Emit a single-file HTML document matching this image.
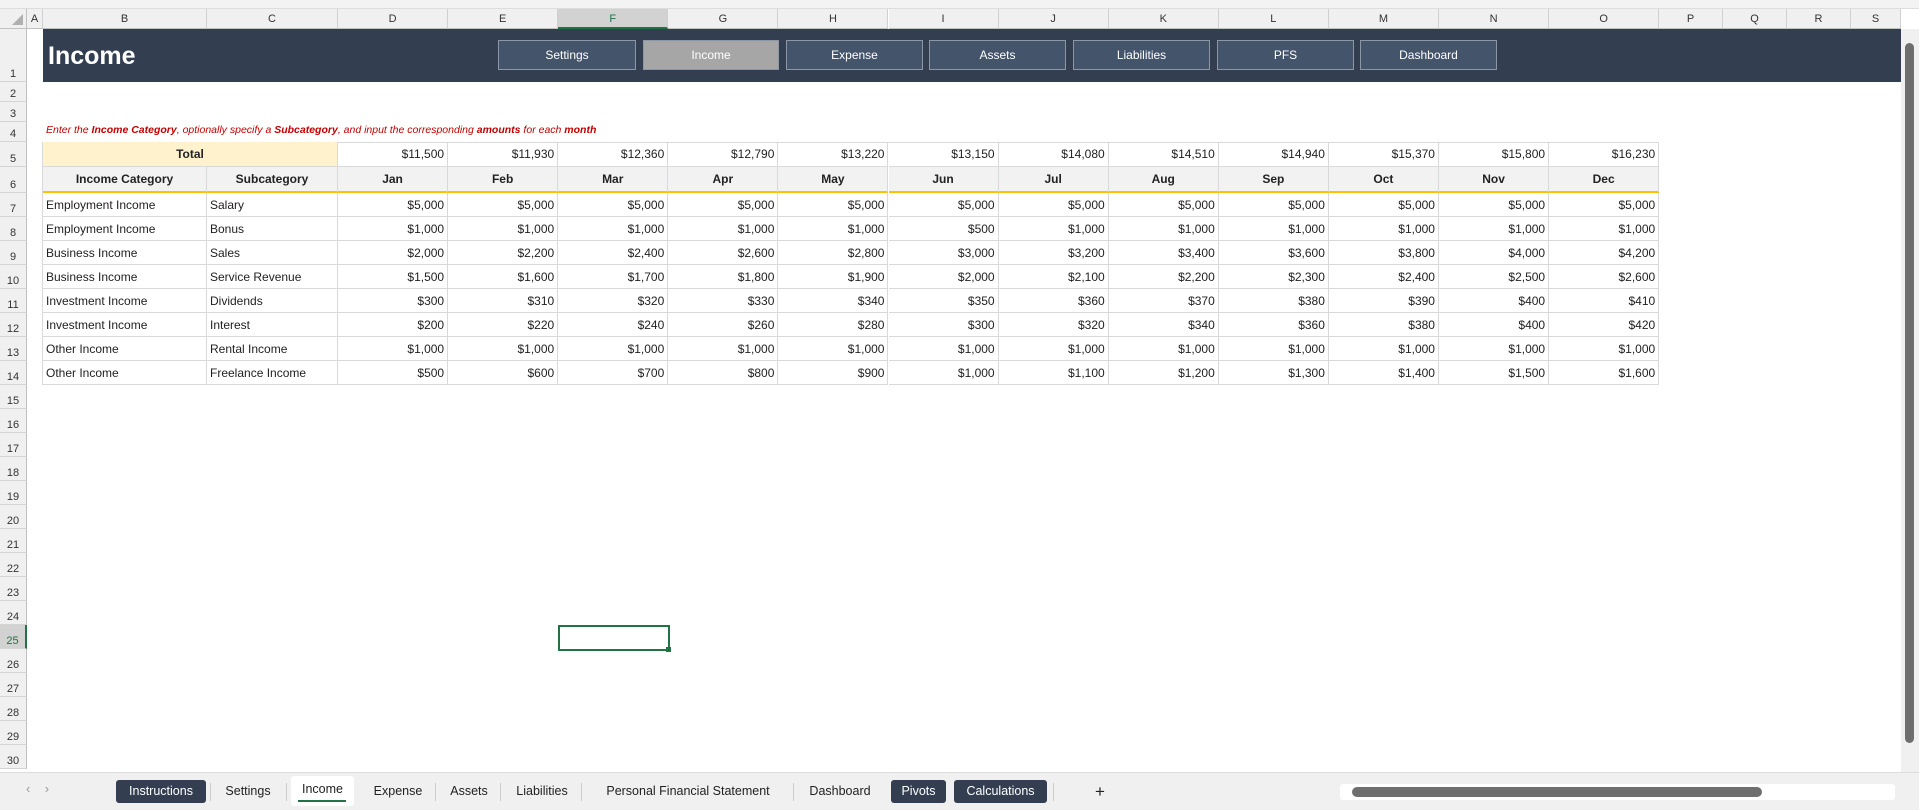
<!DOCTYPE html>
<html><head><meta charset="utf-8"><style>
*{margin:0;padding:0;box-sizing:border-box}
body{width:1919px;height:810px;overflow:hidden;background:#fff;font-family:"Liberation Sans",sans-serif;position:relative}
.a{position:absolute}
.ch{position:absolute;top:9px;height:20px;background:#f0f0f0;border-right:1px solid #d0d0d0;border-bottom:1px solid #c0c0c0;font-size:11px;color:#333;text-align:center;line-height:20px}
.rh{position:absolute;left:0;width:27px;background:#f0f0f0;border-bottom:1px solid #d4d4d4;border-right:1px solid #c0c0c0;font-size:11px;color:#333;text-align:center}
.btn{position:absolute;top:40px;height:30px;background:#44546a;border:1px solid #8c96a4;color:#fff;font-size:12px;text-align:center;line-height:28px}
.c{position:absolute;height:24px;border-right:1px solid #d9d9d9;border-bottom:1px solid #d9d9d9;font-size:12px;line-height:24px;padding:0 3px;color:#222;white-space:nowrap;overflow:hidden}
.r{text-align:right}
.h{background:#f2f2f2;font-weight:bold;text-align:center}
.tab{position:absolute;top:780px;height:23px;font-size:12.5px;line-height:23px;text-align:center;color:#222}
.dk{background:#333f50;color:#fff;border-radius:3px}
.sep{position:absolute;top:783px;width:1px;height:18px;background:#ccc}
</style></head><body>
<div class="a" style="left:0;top:0;width:1919px;height:9px;background:#f3f3f3;border-bottom:1px solid #ddd"></div>
<div class="a" style="left:0;top:9px;width:27px;height:20px;background:#f0f0f0;border-right:1px solid #c0c0c0;border-bottom:1px solid #c0c0c0"><div class="a" style="right:3px;bottom:3px;width:0;height:0;border-left:11px solid transparent;border-bottom:11px solid #b0b0b0"></div></div>
<div id="cols"></div>
<div id="rows"></div>
<div class="a" style="left:43px;top:29px;width:1858px;height:53px;background:#333f50"></div>
<div class="a" style="left:48px;top:40px;color:#fff;font-size:25px;font-weight:bold;line-height:32px">Income</div>
<div class="btn" style="left:498px;width:138px">Settings</div>
<div class="btn" style="left:643px;width:136px;background:#a6a6a6">Income</div>
<div class="btn" style="left:786px;width:137px">Expense</div>
<div class="btn" style="left:929px;width:137px">Assets</div>
<div class="btn" style="left:1073px;width:137px">Liabilities</div>
<div class="btn" style="left:1217px;width:137px">PFS</div>
<div class="btn" style="left:1360px;width:137px">Dashboard</div>
<div class="a" style="left:46px;top:124px;font-size:10.5px;font-style:italic;color:#c00000;white-space:nowrap">Enter the <b>Income Category</b>, optionally specify a <b>Subcategory</b>, and input the corresponding <b>amounts</b> for each <b>month</b></div>
<div id="tbl"></div>
<div class="a" style="left:558px;top:625px;width:112px;height:26px;border:2px solid #217346"></div>
<div class="a" style="left:666px;top:647px;width:5px;height:5px;background:#217346"></div>
<div class="a" style="left:1901px;top:29px;width:18px;height:743px;background:#f0f0f0"></div>
<div class="a" style="left:1905px;top:43px;width:9px;height:700px;background:#6e6e6e;border-radius:5px"></div>
<div class="a" style="left:0;top:772px;width:1919px;height:38px;background:#f0f0f0;border-top:1px solid #ddd"></div>
<div class="a" style="left:26px;top:781px;font-size:13px;color:#999">&lsaquo;&nbsp;&nbsp;&nbsp;&nbsp;&rsaquo;</div>
<div class="tab dk" style="left:116px;width:90px">Instructions</div>
<div class="sep" style="left:210px"></div>
<div class="tab" style="left:216px;width:64px">Settings</div>
<div class="sep" style="left:286px"></div>
<div class="a" style="left:291px;top:776px;width:63px;height:30px;background:#fff;border-radius:3px"></div>
<div class="tab" style="left:291px;top:778px;width:63px">Income</div>
<div class="a" style="left:298px;top:800px;width:48px;height:2px;background:#217346"></div>
<div class="tab" style="left:366px;width:64px">Expense</div>
<div class="sep" style="left:435px"></div>
<div class="tab" style="left:441px;width:56px">Assets</div>
<div class="sep" style="left:500px"></div>
<div class="tab" style="left:506px;width:72px">Liabilities</div>
<div class="sep" style="left:581px"></div>
<div class="tab" style="left:590px;width:196px">Personal Financial Statement</div>
<div class="sep" style="left:793px"></div>
<div class="tab" style="left:800px;width:80px">Dashboard</div>
<div class="tab dk" style="left:891px;width:55px">Pivots</div>
<div class="tab dk" style="left:954px;width:93px">Calculations</div>
<div class="sep" style="left:1053px"></div>
<div class="tab" style="left:1090px;width:20px;font-size:17px">+</div>
<div class="a" style="left:1340px;top:784px;width:555px;height:16px;background:#fff;border-radius:3px"></div>
<div class="a" style="left:1352px;top:787px;width:410px;height:10px;background:#6e6e6e;border-radius:5px"></div>
<script>
var cl=['A','B','C','D','E','F','G','H','I','J','K','L','M','N','O','P','Q','R','S'];
var x=[27,43,207,338];for(var i=1;i<=12;i++)x.push(338+110.1*i);x.push(1723,1787,1851,1901);
var h='';for(var i=0;i<cl.length;i++){var s=cl[i]=='F'?'background:#d2d2d2;color:#217346;border-bottom:2px solid #217346;':'';h+='<div class="ch" style="left:'+x[i]+'px;width:'+(x[i+1]-x[i])+'px;'+s+'">'+cl[i]+'</div>';}
document.getElementById('cols').innerHTML=h;
var ry=[29,82,102,122,142,167,193];for(var i=7;i<=30;i++)ry.push(193+(i-6)*24);
h='';for(var r=1;r<=30;r++){var t=ry[r-1],b=ry[r];var s=r==25?'background:#d2d2d2;color:#217346;border-right:2px solid #217346;':'';h+='<div class="rh" style="top:'+t+'px;height:'+(b-t)+'px;line-height:'+((b-t)*2-16)+'px;'+s+'">'+r+'</div>';}
document.getElementById('rows').innerHTML=h;
var tot=['$11,500','$11,930','$12,360','$12,790','$13,220','$13,150','$14,080','$14,510','$14,940','$15,370','$15,800','$16,230'];
var mo=['Jan','Feb','Mar','Apr','May','Jun','Jul','Aug','Sep','Oct','Nov','Dec'];
var d=[['Employment Income','Salary',[5000,5000,5000,5000,5000,5000,5000,5000,5000,5000,5000,5000]],
['Employment Income','Bonus',[1000,1000,1000,1000,1000,500,1000,1000,1000,1000,1000,1000]],
['Business Income','Sales',[2000,2200,2400,2600,2800,3000,3200,3400,3600,3800,4000,4200]],
['Business Income','Service Revenue',[1500,1600,1700,1800,1900,2000,2100,2200,2300,2400,2500,2600]],
['Investment Income','Dividends',[300,310,320,330,340,350,360,370,380,390,400,410]],
['Investment Income','Interest',[200,220,240,260,280,300,320,340,360,380,400,420]],
['Other Income','Rental Income',[1000,1000,1000,1000,1000,1000,1000,1000,1000,1000,1000,1000]],
['Other Income','Freelance Income',[500,600,700,800,900,1000,1100,1200,1300,1400,1500,1600]]];
function f(n){return '$'+n.toLocaleString('en-US')}
function cell(l,t,w,txt,cls,st){return '<div class="c '+cls+'" style="left:'+l+'px;top:'+t+'px;width:'+w+'px;'+(st||'')+'">'+txt+'</div>'}
h='<div class="a" style="left:43px;top:142px;width:1616px;height:1px;background:#d9d9d9"></div><div class="a" style="left:42px;top:142px;width:1px;height:243px;background:#d9d9d9"></div>';
h+=cell(43,142,295,'Total','h','background:#fff2cc;height:25px;line-height:25px');
for(var i=0;i<12;i++){h+=cell(x[i+3],142,x[i+4]-x[i+3],tot[i],'r','height:25px;line-height:25px');}
h+=cell(43,167,164,'Income Category','h','height:26px;line-height:24px;border-bottom:2px solid #ffc000');
h+=cell(207,167,131,'Subcategory','h','height:26px;line-height:24px;border-bottom:2px solid #ffc000');
for(var i=0;i<12;i++)h+=cell(x[i+3],167,x[i+4]-x[i+3],mo[i],'h','height:26px;line-height:24px;border-bottom:2px solid #ffc000');
for(var r=0;r<8;r++){var t=193+r*24;h+=cell(43,t,164,d[r][0],'');h+=cell(207,t,131,d[r][1],'');for(var i=0;i<12;i++)h+=cell(x[i+3],t,x[i+4]-x[i+3],f(d[r][2][i]),'r');}
document.getElementById('tbl').innerHTML=h;
</script>
</body></html>
